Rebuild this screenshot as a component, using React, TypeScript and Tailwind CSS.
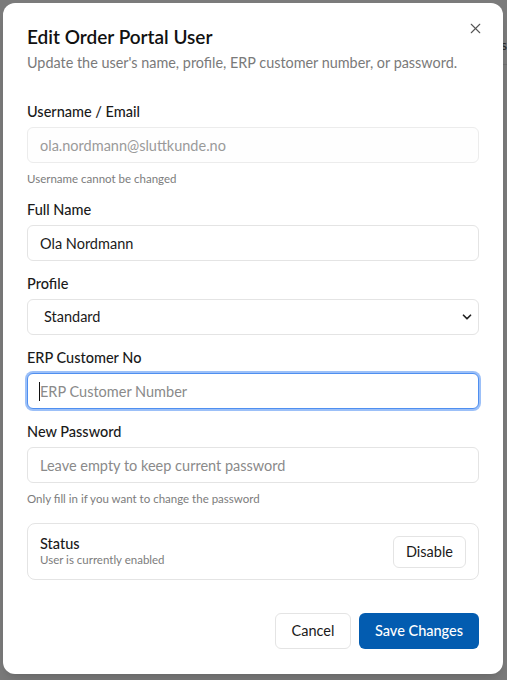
import { X, ChevronDown } from 'lucide-react';

// Edit user dialog shown over a dimmed page
export default function App() {
  return (
    <div
      className="relative w-[507px] h-[680px] overflow-hidden bg-[#7b7b7b]"
      style={{ fontFamily: 'Lato, "Liberation Sans", sans-serif' }}
    >
      {/* page behind the overlay */}
      <div className="absolute right-0 top-[34px] text-[14px] text-[#2a2a2a]">s</div>
      <div className="absolute right-0 top-[64px] w-[10px] h-px bg-[#6f6f6f]" />

      <div className="absolute left-[3px] top-[3px] w-[500px] h-[671px] rounded-xl bg-white px-6 pt-6 shadow-lg">
        <button className="absolute right-[19px] top-[17px] text-[#555]">
          <X className="w-[17px] h-[17px]" strokeWidth={1.5} />
        </button>

        <div className="flex flex-col gap-1.5">
          <h2 className="text-[19px] font-semibold leading-[20px] text-[#111]">Edit Order Portal User</h2>
          <p className="whitespace-nowrap text-[14.4px] leading-[20px] text-[#7a7a7a]">
            Update the user's name, profile, ERP customer number, or password.
          </p>
        </div>

        <div className="flex flex-col gap-4 pt-[32px]">
          <div className="flex flex-col gap-2">
            <label className="text-[14.5px] font-medium leading-[14px] text-[#1a1a1a]">Username / Email</label>
            <input
              disabled
              value="ola.nordmann@sluttkunde.no"
              readOnly
              className="h-9 rounded-md border border-[#ececec] bg-[#fefefe] px-3 text-[14.5px] text-[#9a9a9a]"
            />
            <p className="text-[11.5px] leading-[16px] text-[#7c7c7c]">Username cannot be changed</p>
          </div>

          <div className="flex flex-col gap-2">
            <label className="text-[14.5px] font-medium leading-[14px] text-[#1a1a1a]">Full Name</label>
            <input
              value="Ola Nordmann"
              readOnly
              className="h-9 rounded-md border border-[#e4e4e4] bg-white px-3 text-[14.5px] text-[#1a1a1a] outline-none"
            />
          </div>

          <div className="flex flex-col gap-2">
            <label className="text-[14.5px] font-medium leading-[14px] text-[#1a1a1a]">Profile</label>
            <div className="relative">
              <div className="flex h-9 items-center rounded-md border border-[#e4e4e4] bg-white pl-4 text-[14.5px] text-[#1a1a1a]">
                Standard
              </div>
              <ChevronDown className="absolute right-[5px] top-[11px] w-[14px] h-[14px] text-[#222]" strokeWidth={3} />
            </div>
          </div>

          <div className="flex flex-col gap-2">
            <label className="text-[14.5px] font-medium leading-[14px] text-[#1a1a1a]">ERP Customer No</label>
            <div className="relative">
              <input
                placeholder="ERP Customer Number"
                readOnly
                className="h-9 w-full rounded-md border border-[#4f8ff0] bg-white px-3 text-[14.5px] text-[#1a1a1a] outline-none ring-2 ring-[#9cc0f8] placeholder:text-[#8a8a8a]"
              />
              <span className="absolute left-[12px] top-[9px] w-px h-[19px] bg-[#111]" />
            </div>
          </div>

          <div className="flex flex-col gap-2">
            <label className="text-[14.5px] font-medium leading-[14px] text-[#1a1a1a]">New Password</label>
            <input
              placeholder="Leave empty to keep current password"
              readOnly
              className="h-9 rounded-md border border-[#e4e4e4] bg-white px-3 text-[14.5px] outline-none placeholder:text-[#8a8a8a]"
            />
            <p className="text-[11.5px] leading-[16px] text-[#7c7c7c]">Only fill in if you want to change the password</p>
          </div>

          <div className="flex items-center justify-between rounded-lg border border-[#e4e4e4] px-3 h-[57px]">
            <div className="flex flex-col">
              <span className="text-[14.5px] font-medium leading-[16px] text-[#1a1a1a]">Status</span>
              <span className="text-[11.5px] leading-[16px] text-[#7c7c7c]">User is currently enabled</span>
            </div>
            <button className="h-8 rounded-md border border-[#e4e4e4] bg-white px-3 text-[14.5px] text-[#1a1a1a]">
              Disable
            </button>
          </div>
        </div>

        <div className="mt-[33px] flex justify-end gap-2">
          <button className="h-9 w-[76px] rounded-md border border-[#e4e4e4] bg-white text-[14.5px] text-[#1a1a1a]">
            Cancel
          </button>
          <button className="h-9 w-[120px] rounded-md bg-[#035cb0] text-[14.5px] font-medium text-white">
            Save Changes
          </button>
        </div>
      </div>
    </div>
  );
}
